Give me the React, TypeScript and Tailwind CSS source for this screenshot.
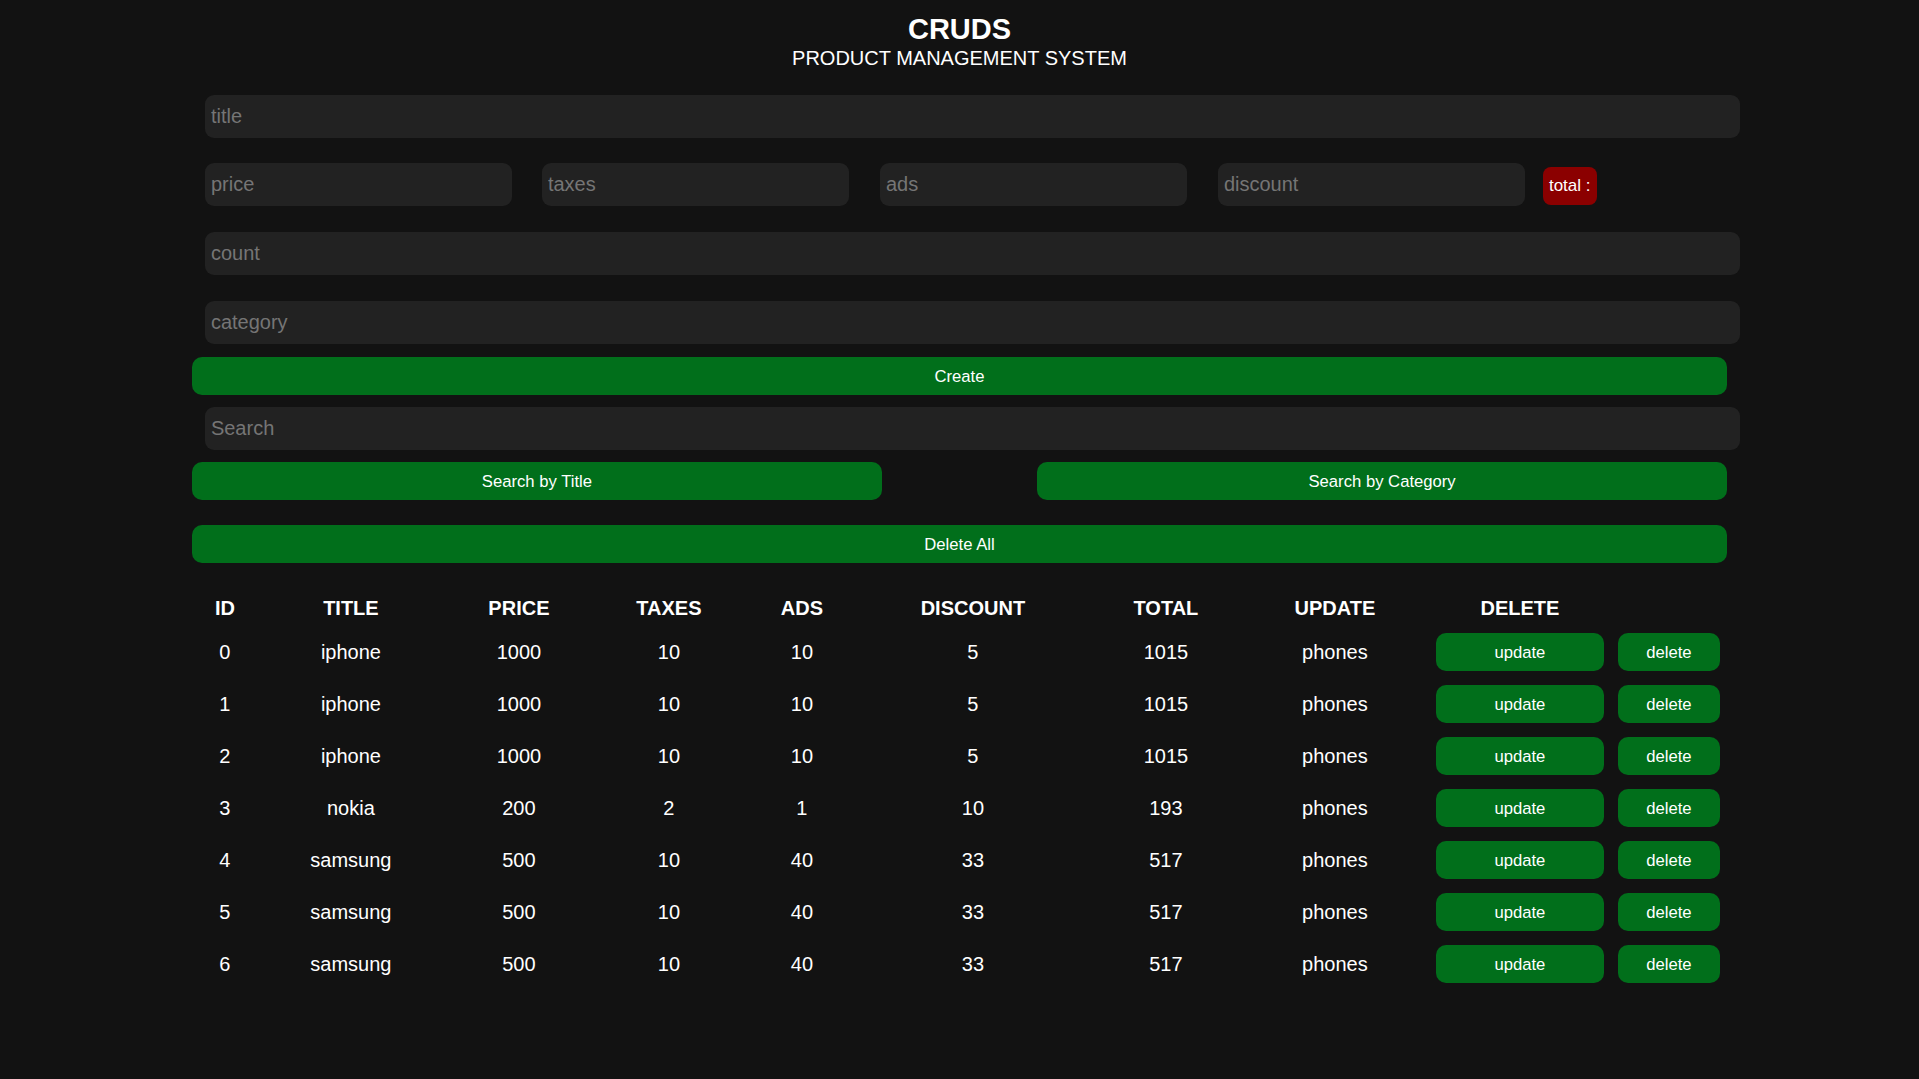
import { useState } from 'react';

type Product = {
    id: number;
    title: string;
    price: number;
    taxes: number;
    ads: number;
    discount: number;
    total: number;
    category: string;
};

const products: Product[] = [
    { id: 0, title: 'iphone', price: 1000, taxes: 10, ads: 10, discount: 5, total: 1015, category: 'phones' },
    { id: 1, title: 'iphone', price: 1000, taxes: 10, ads: 10, discount: 5, total: 1015, category: 'phones' },
    { id: 2, title: 'iphone', price: 1000, taxes: 10, ads: 10, discount: 5, total: 1015, category: 'phones' },
    { id: 3, title: 'nokia', price: 200, taxes: 2, ads: 1, discount: 10, total: 193, category: 'phones' },
    { id: 4, title: 'samsung', price: 500, taxes: 10, ads: 40, discount: 33, total: 517, category: 'phones' },
    { id: 5, title: 'samsung', price: 500, taxes: 10, ads: 40, discount: 33, total: 517, category: 'phones' },
    { id: 6, title: 'samsung', price: 500, taxes: 10, ads: 40, discount: 33, total: 517, category: 'phones' },
];

const headers = ['ID', 'TITLE', 'PRICE', 'TAXES', 'ADS', 'DISCOUNT', 'TOTAL', 'UPDATE', 'DELETE', ''];

const inputClass =
    'h-[43px] rounded-[9px] bg-[#222] px-[6px] text-[20px] text-white outline-none placeholder:text-[#757575]';

const buttonClass =
    'h-[38px] rounded-[10px] bg-[#016f1b] text-[16.67px] text-white cursor-pointer';

const gridCols =
    'grid grid-cols-[66px_186px_150px_150px_116px_226px_160px_178px_192px_106px] items-center text-center';

export default function App() {
    const [search, setSearch] = useState('');

    return (
        <div className="min-h-screen bg-[#121212] text-white font-['Liberation_Sans',Arial,sans-serif]">
            <div className="w-4/5 mx-auto flex flex-col">
                {/* head */}
                <div className="pt-[13px] text-center uppercase">
                    <h2 className="text-[29px] font-bold leading-[32px]">CRUDS</h2>
                    <p className="mt-[1px] text-[20px] leading-[24px]">Product Management System</p>
                </div>

                {/* inputs */}
                <input className={`${inputClass} mt-[25px] ml-[13px] w-full`} placeholder="title" />

                <div className="mt-[25px] ml-[13px] flex items-center">
                    <input className={`${inputClass} w-[307px]`} placeholder="price" />
                    <input className={`${inputClass} w-[307px] ml-[30px]`} placeholder="taxes" />
                    <input className={`${inputClass} w-[307px] ml-[31px]`} placeholder="ads" />
                    <input className={`${inputClass} w-[307px] ml-[31px]`} placeholder="discount" />
                    <small className="ml-[18px] mt-[2px] flex h-[38px] items-center rounded-[8px] bg-[#8b0000] px-[6px] text-[17px]">
                        total :
                    </small>
                </div>

                <input className={`${inputClass} mt-[26px] ml-[13px] w-full`} placeholder="count" />
                <input className={`${inputClass} mt-[26px] ml-[13px] w-full`} placeholder="category" />

                <button className={`${buttonClass} mt-[13px] w-full`}>Create</button>

                {/* search */}
                <input
                    className={`${inputClass} mt-[12px] ml-[13px] w-full`}
                    placeholder="Search"
                    value={search}
                    onChange={(e) => setSearch(e.target.value)}
                />
                <div className="mt-[12px] flex justify-between">
                    <button className={`${buttonClass} w-[690px]`}>Search by Title</button>
                    <button className={`${buttonClass} w-[690px]`}>Search by Category</button>
                </div>

                <button className={`${buttonClass} mt-[25px] w-full h-[37px]`}>Delete All</button>

                {/* table */}
                <div className="mt-[26px] text-[20px]">
                    <div className={`${gridCols} h-[37px] font-bold`}>
                        {headers.map((h, i) => (
                            <div key={i}>{h}</div>
                        ))}
                    </div>
                    {products.map((p) => (
                        <div key={p.id} className={`${gridCols} h-[52px]`}>
                            <div>{p.id}</div>
                            <div>{p.title}</div>
                            <div>{p.price}</div>
                            <div>{p.taxes}</div>
                            <div>{p.ads}</div>
                            <div>{p.discount}</div>
                            <div>{p.total}</div>
                            <div>{p.category}</div>
                            <div className="flex justify-center">
                                <button className={`${buttonClass} w-[168px]`}>update</button>
                            </div>
                            <div className="flex justify-center">
                                <button className={`${buttonClass} w-[102px]`}>delete</button>
                            </div>
                        </div>
                    ))}
                </div>
            </div>
        </div>
    );
}
